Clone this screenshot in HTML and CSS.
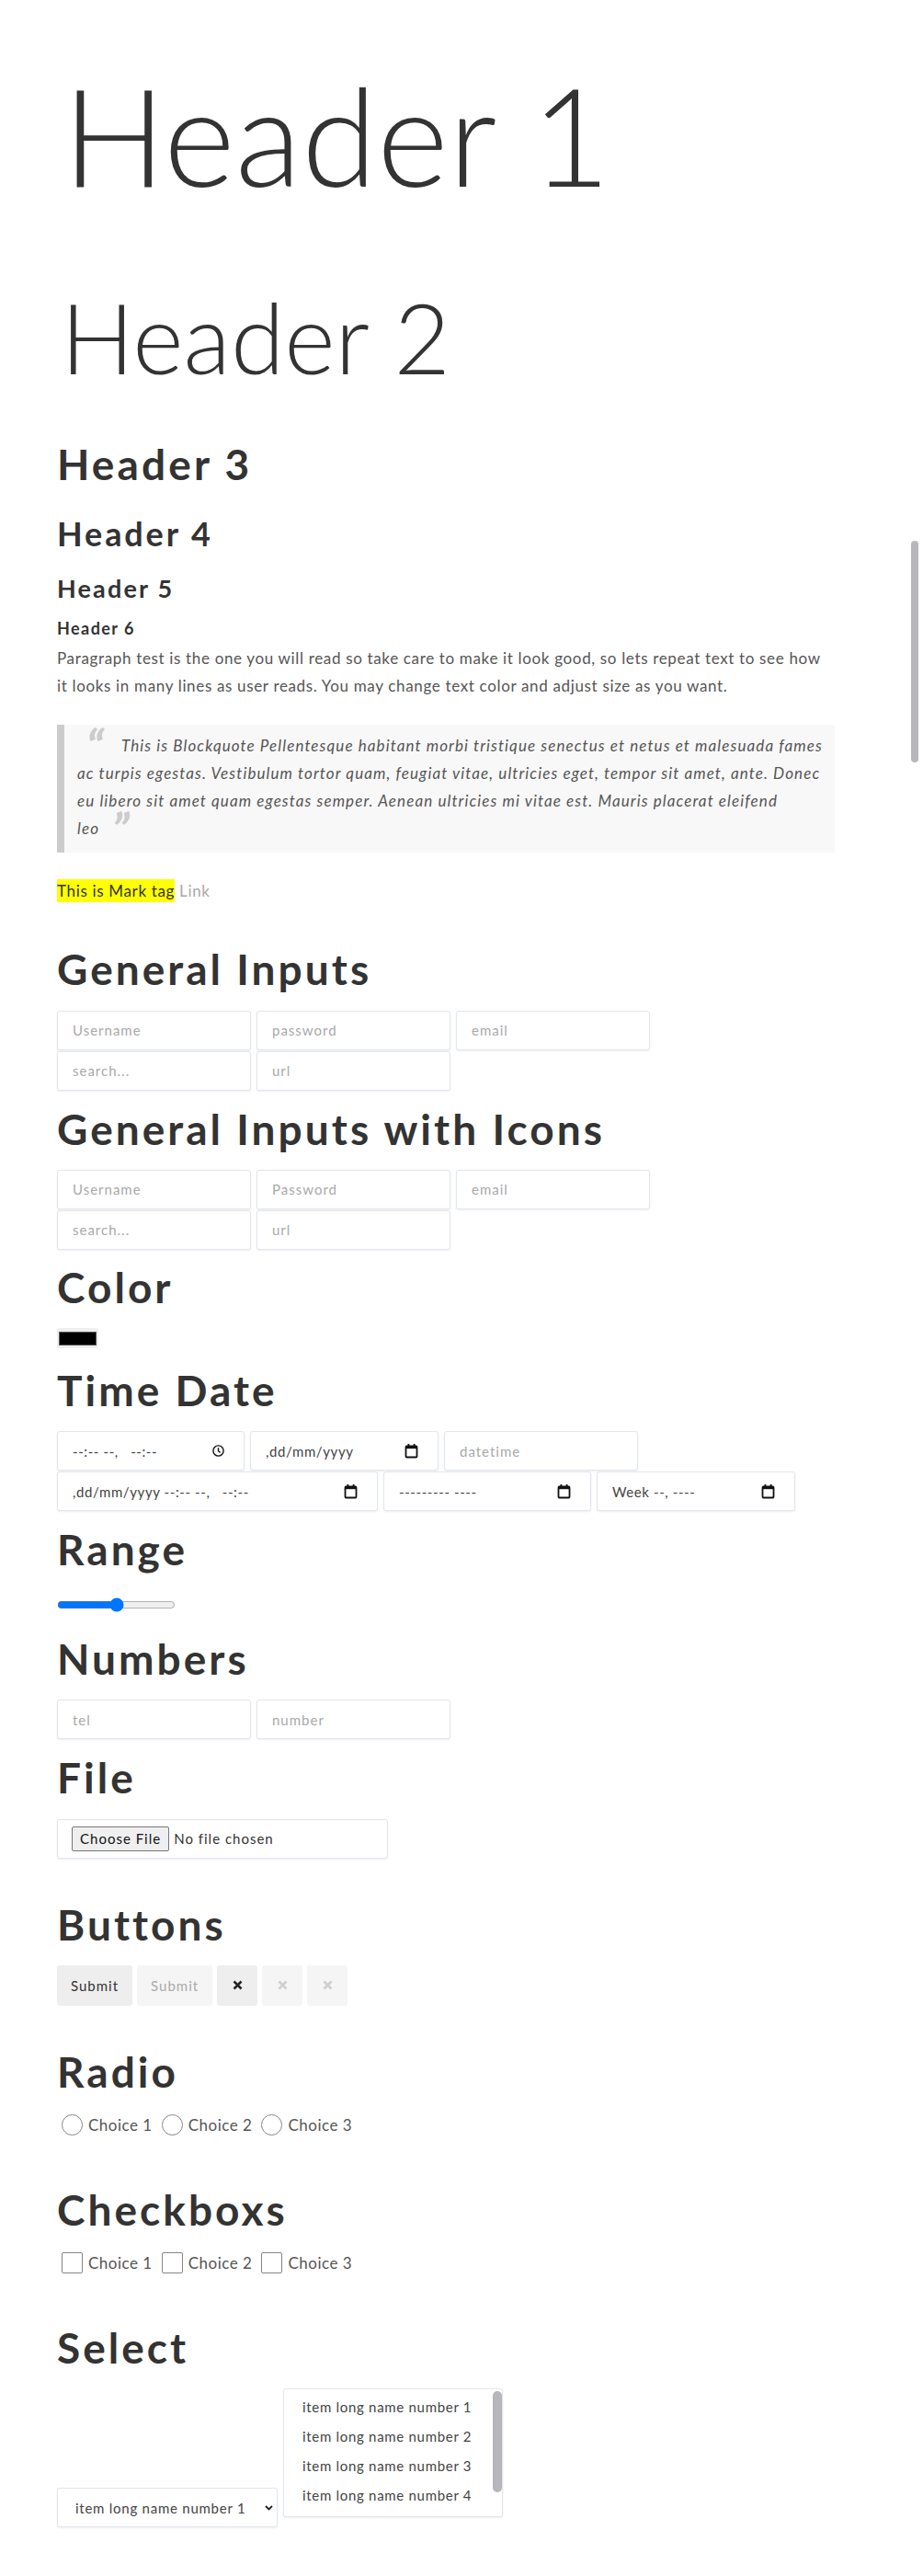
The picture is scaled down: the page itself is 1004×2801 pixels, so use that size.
FILE: index.html
```html
<!DOCTYPE html>
<html lang="en">
<head>
<meta charset="utf-8">
<title>Form elements</title>
<link rel="stylesheet" href="styles.css">
</head>
<body>
<div class="page-thumb" aria-hidden="true"></div>
<main class="page">
  <h1 class="t-h1">Header 1</h1>
  <h2 class="t-h2">Header 2</h2>
  <h3 class="t-h3">Header 3</h3>
  <h4 class="t-h4">Header 4</h4>
  <h5 class="t-h5">Header 5</h5>
  <h6 class="t-h6">Header 6</h6>
  <p class="para lines">Paragraph test is the one you will read so take care to make it look good, so lets repeat text to see how<br>it looks in many lines as user reads. You may change text color and adjust size as you want.</p>
  <blockquote class="quote"><span class="q-open">&ldquo;</span>This is Blockquote Pellentesque habitant morbi tristique senectus et netus et malesuada fames<br>ac turpis egestas. Vestibulum tortor quam, feugiat vitae, ultricies eget, tempor sit amet, ante. Donec<br>eu libero sit amet quam egestas semper. Aenean ultricies mi vitae est. Mauris placerat eleifend<br>leo<span class="q-close">&rdquo;</span></blockquote>
  <p class="para mark-line"><mark class="mark">This is Mark tag</mark> <a class="link" href="#">Link</a></p>

  <section class="sec sec-gi">
    <h2 class="sec-title">General Inputs</h2>
    <div class="rows">
      <div class="row">
        <input class="field w210" type="text" placeholder="Username">
        <input class="field w210" type="password" placeholder="password">
        <input class="field w210" type="email" placeholder="email">
      </div>
      <div class="row">
        <input class="field w210" type="search" placeholder="search...">
        <input class="field w210" type="url" placeholder="url">
      </div>
    </div>
  </section>

  <section class="sec sec-icons">
    <h2 class="sec-title">General Inputs with Icons</h2>
    <div class="rows">
      <div class="row">
        <input class="field w210" type="text" placeholder="Username">
        <input class="field w210" type="password" placeholder="Password">
        <input class="field w210" type="email" placeholder="email">
      </div>
      <div class="row">
        <input class="field w210" type="search" placeholder="search...">
        <input class="field w210" type="url" placeholder="url">
      </div>
    </div>
  </section>

  <section class="sec sec-color">
    <h2 class="sec-title">Color</h2>
    <div class="color-well" role="img" aria-label="color #000000"><span class="color-swatch"></span></div>
  </section>

  <section class="sec sec-time">
    <h2 class="sec-title">Time Date</h2>
    <div class="rows">
      <div class="row">
        <div class="field fake w204"><span class="val">--:-- --,&nbsp;&nbsp; --:--</span>
          <svg class="ico" width="13" height="13" viewBox="0 0 13 13"><circle cx="6.5" cy="6.5" r="5.6" fill="none" stroke="#111" stroke-width="1.4"/><path d="M6.5 3.2V6.7L8.6 8.6" fill="none" stroke="#111" stroke-width="1.4"/></svg>
        </div>
        <div class="field fake w205"><span class="val">,dd/mm/yyyy</span>
          <svg class="ico cal" width="15" height="17" viewBox="0 0 15 17"><rect x="1.5" y="3.5" width="12" height="12" rx="1" fill="none" stroke="#111" stroke-width="1.8"/><rect x="1.5" y="3" width="12" height="3.2" fill="#111"/><rect x="3.5" y="1" width="1.8" height="3" fill="#111"/><rect x="9.7" y="1" width="1.8" height="3" fill="#111"/></svg>
        </div>
        <input class="field w211" type="text" placeholder="datetime">
      </div>
      <div class="row">
        <div class="field fake w349"><span class="val">,dd/mm/yyyy --:-- --,&nbsp;&nbsp; --:--</span>
          <svg class="ico cal" width="15" height="17" viewBox="0 0 15 17"><rect x="1.5" y="3.5" width="12" height="12" rx="1" fill="none" stroke="#111" stroke-width="1.8"/><rect x="1.5" y="3" width="12" height="3.2" fill="#111"/><rect x="3.5" y="1" width="1.8" height="3" fill="#111"/><rect x="9.7" y="1" width="1.8" height="3" fill="#111"/></svg>
        </div>
        <div class="field fake w226"><span class="val">--------- ----</span>
          <svg class="ico cal" width="15" height="17" viewBox="0 0 15 17"><rect x="1.5" y="3.5" width="12" height="12" rx="1" fill="none" stroke="#111" stroke-width="1.8"/><rect x="1.5" y="3" width="12" height="3.2" fill="#111"/><rect x="3.5" y="1" width="1.8" height="3" fill="#111"/><rect x="9.7" y="1" width="1.8" height="3" fill="#111"/></svg>
        </div>
        <div class="field fake w216"><span class="val">Week --, ----</span>
          <svg class="ico cal" width="15" height="17" viewBox="0 0 15 17"><rect x="1.5" y="3.5" width="12" height="12" rx="1" fill="none" stroke="#111" stroke-width="1.8"/><rect x="1.5" y="3" width="12" height="3.2" fill="#111"/><rect x="3.5" y="1" width="1.8" height="3" fill="#111"/><rect x="9.7" y="1" width="1.8" height="3" fill="#111"/></svg>
        </div>
      </div>
    </div>
  </section>

  <section class="sec sec-range">
    <h2 class="sec-title">Range</h2>
    <input class="range" type="range" min="0" max="100" value="50">
  </section>

  <section class="sec sec-num">
    <h2 class="sec-title">Numbers</h2>
    <div class="row">
      <input class="field w210" type="tel" placeholder="tel">
      <input class="field w210" type="text" placeholder="number">
    </div>
  </section>

  <section class="sec sec-file">
    <h2 class="sec-title">File</h2>
    <div class="field file-field"><span class="file-btn">Choose File</span><span class="file-name">No file chosen</span></div>
  </section>

  <section class="sec sec-btn">
    <h2 class="sec-title">Buttons</h2>
    <div class="btn-row">
      <button class="btn" type="button">Submit</button>
      <button class="btn btn-off" type="button" disabled>Submit</button>
      <button class="btn btn-x" type="button" aria-label="close"><svg width="11" height="11" viewBox="0 0 11 11"><path d="M1.5 1.5L9.5 9.5M9.5 1.5L1.5 9.5" stroke="#222" stroke-width="2.6"/></svg></button>
      <button class="btn btn-x btn-off" type="button" aria-label="close" disabled><svg width="11" height="11" viewBox="0 0 11 11"><path d="M1.5 1.5L9.5 9.5M9.5 1.5L1.5 9.5" stroke="#cfcfcf" stroke-width="2.6"/></svg></button>
      <button class="btn btn-x btn-off" type="button" aria-label="close" disabled><svg width="11" height="11" viewBox="0 0 11 11"><path d="M1.5 1.5L9.5 9.5M9.5 1.5L1.5 9.5" stroke="#cfcfcf" stroke-width="2.6"/></svg></button>
    </div>
  </section>

  <section class="sec sec-radio">
    <h2 class="sec-title">Radio</h2>
    <div class="choices">
      <label class="choice"><input class="radio" type="radio" name="r">Choice 1</label>
      <label class="choice"><input class="radio" type="radio" name="r">Choice 2</label>
      <label class="choice"><input class="radio" type="radio" name="r">Choice 3</label>
    </div>
  </section>

  <section class="sec sec-check">
    <h2 class="sec-title">Checkboxs</h2>
    <div class="choices">
      <label class="choice"><input class="check" type="checkbox">Choice 1</label>
      <label class="choice"><input class="check" type="checkbox">Choice 2</label>
      <label class="choice"><input class="check" type="checkbox">Choice 3</label>
    </div>
  </section>

  <section class="sec sec-select">
    <h2 class="sec-title">Select</h2>
    <div class="select-row">
      <div class="select-wrap">
        <select class="select">
          <option>item long name number 1</option>
          <option>item long name number 2</option>
          <option>item long name number 3</option>
          <option>item long name number 4</option>
        </select>
        <svg class="chev" width="9" height="6" viewBox="0 0 9 6"><path d="M1 1L4.5 4.5L8 1" fill="none" stroke="#222" stroke-width="1.8"/></svg>
      </div>
      <div class="listbox" role="listbox" aria-multiselectable="true">
        <div class="opt" role="option">item long name number 1</div>
        <div class="opt" role="option">item long name number 2</div>
        <div class="opt" role="option">item long name number 3</div>
        <div class="opt" role="option">item long name number 4</div>
        <span class="list-thumb" aria-hidden="true"></span>
      </div>
    </div>
  </section>
</main>
</body>
</html>
```

FILE: styles.css
```css
* { box-sizing: border-box; }
html, body { margin: 0; padding: 0; background: #fff; }
body {
  position: relative;
  font-family: Lato, "Noto Sans", sans-serif;
  color: #333;
}
.page {
  width: 1004px;
  padding: 0 96px 53px 62px;
}
.page-thumb {
  position: absolute;
  left: 991px;
  top: 588px;
  width: 8px;
  height: 241px;
  border-radius: 4px;
  background: #b6b6bc;
}

h1, h2, h3, h4, h5, h6, p, blockquote { margin: 0; }

.t-h1 { font-size: 149px; font-weight: 300; line-height: 1.2; margin-top: 57px; text-indent: 6px; }
.t-h2 { font-size: 106px; font-weight: 300; line-height: 1.2; margin-top: 67px; text-indent: 4px; }
.t-h3 { font-size: 46px; font-weight: 700; line-height: 1.2; margin-top: 47px; letter-spacing: 0.068em; }
.t-h4 { font-size: 36px; font-weight: 700; line-height: 1.2; margin-top: 27px; letter-spacing: 0.08em; }
.t-h5 { font-size: 27px; font-weight: 700; line-height: 1.2; margin-top: 22px; letter-spacing: 0.08em; }
.t-h6 { font-size: 18px; font-weight: 700; line-height: 1.2; margin-top: 16px; letter-spacing: 0.08em; }

.para {
  font-size: 17px;
  letter-spacing: 0.66px;
  line-height: 30px;
  color: #555;
  margin-top: 7px;
}
.lines { white-space: nowrap; }
.quote {
  margin-top: 27px;
  padding: 8px 0 11px 14px;
  background: #f8f8f8;
  border-left: 8px solid #ccc;
  font-size: 17px;
  letter-spacing: 1.1px;
  line-height: 30px;
  font-style: italic;
  color: #555;
  white-space: nowrap;
}
.q-open, .q-close {
  font-size: 50px;
  font-weight: 900;
  line-height: 0;
  letter-spacing: 0;
  color: #ccc;
  vertical-align: -13px;
}
.q-open { display: inline-block; width: 48px; padding-left: 10px; }
.q-close { margin-left: 14px; }

.mark-line { margin-top: 27px; }
.mark { background: #ff0; color: #333; padding: 2px 0; }
.link { color: #aaa; text-decoration: none; }

.sec-title {
  font-size: 46px;
  font-weight: 700;
  line-height: 1.2;
  letter-spacing: 0.066em;
  margin: 0 0 17px;
}
.sec-gi { margin-top: 42px; }
.sec-icons { margin-top: 14px; }
.sec-color { margin-top: 13px; }
.sec-time { margin-top: 18px; }
.sec-range { margin-top: 14px; }
.sec-num { margin-top: 23px; }
.sec-file { margin-top: 14px; }
.sec-btn { margin-top: 44px; }
.sec-radio { margin-top: 44px; }
.sec-check { margin-top: 53px; }
.sec-select { margin-top: 53px; }

.rows { display: flex; flex-direction: column; gap: 1px; }
.row { display: flex; gap: 6px; }

.field {
  height: 43px;
  border: 1px solid #e2e6ee;
  border-radius: 3px;
  box-shadow: 0 1px 2px rgba(30, 40, 70, 0.08);
  background: #fff;
  padding: 0 16px;
  font-family: Lato, "Noto Sans", sans-serif;
  font-size: 15px;
  letter-spacing: 1px;
  color: #444;
  outline: none;
}
.field::placeholder { color: #a9a9a9; }
.w204 { width: 204px; }
.w205 { width: 205px; }
.w210 { width: 211px; }
.w211 { width: 211px; }
.w216 { width: 216px; }
.w226 { width: 226px; }
.w349 { width: 349px; }

.fake {
  display: flex;
  align-items: center;
  justify-content: space-between;
  padding-right: 21px;
}
.val { color: #444; white-space: pre; letter-spacing: 0.6px; }

.color-well {
  width: 45px;
  height: 22px;
  padding: 4px 2px 3px;
  background: #efefef;
  border-radius: 2px;
  margin-top: 2px;
}
.color-swatch {
  display: block;
  height: 100%;
  background: #000;
  border: 1px solid #555;
}

.range {
  display: block;
  width: 129px;
  height: 16px;
  margin: 25px 0 2px;
  accent-color: #0075ff;
}

.file-field {
  display: flex;
  align-items: center;
  width: 360px;
  padding: 0 15px;
  color: #333;
}
.file-btn {
  display: inline-flex;
  align-items: center;
  height: 27px;
  padding: 0 8px;
  background: #efefef;
  border: 1px solid #767676;
  border-radius: 2px;
  color: #111;
  font-size: 15px;
  margin-right: 5px;
}
.file-name { font-size: 15px; color: #333; }

.btn-row { display: flex; gap: 5px; }
.btn {
  height: 44px;
  padding: 0 15px;
  border: 0;
  border-radius: 3px;
  background: #eee;
  color: #333;
  font-family: Lato, "Noto Sans", sans-serif;
  font-size: 15px;
  letter-spacing: 1px;
}
.btn-off { background: #f5f5f5; color: #aaa; }
.btn-x {
  width: 44px;
  padding: 0;
  display: inline-flex;
  align-items: center;
  justify-content: center;
}

.choices { display: flex; align-items: center; padding-top: 2px; }
.choice {
  display: inline-flex;
  align-items: center;
  font-size: 17px;
  letter-spacing: 0.5px;
  color: #555;
  margin-right: 5px;
}
.radio, .check {
  appearance: none;
  -webkit-appearance: none;
  width: 23px;
  height: 23px;
  margin: 0 6px 0 5px;
  border: 1px solid #858585;
  background: #fff;
}
.radio { border-radius: 50%; }
.check { border-radius: 2px; }

.select-row { display: flex; align-items: flex-end; gap: 6px; }
.select-wrap { position: relative; width: 240px; }
.select {
  appearance: none;
  -webkit-appearance: none;
  display: block;
  width: 240px;
  height: 43px;
  padding: 0 30px 0 19px;
  border: 1px solid #e2e6ee;
  border-radius: 3px;
  box-shadow: 0 1px 2px rgba(30, 40, 70, 0.08);
  background: #fff;
  font-family: Lato, "Noto Sans", sans-serif;
  font-size: 15px;
  letter-spacing: 0.75px;
  color: #444;
}
.chev { position: absolute; right: 5px; top: 19px; }
.listbox {
  position: relative;
  width: 239px;
  height: 140px;
  margin-bottom: 11px;
  padding: 3px 0 0 20px;
  overflow: hidden;
  border: 1px solid #e2e6ee;
  border-radius: 3px;
  box-shadow: 0 1px 2px rgba(30, 40, 70, 0.08);
  background: #fff;
}
.opt {
  font-size: 15px;
  letter-spacing: 0.7px;
  line-height: 32px;
  color: #444;
  white-space: nowrap;
}
.list-thumb {
  position: absolute;
  left: 227px;
  top: 2px;
  width: 10px;
  height: 110px;
  border-radius: 5px;
  background: #b6b6bc;
}
```
